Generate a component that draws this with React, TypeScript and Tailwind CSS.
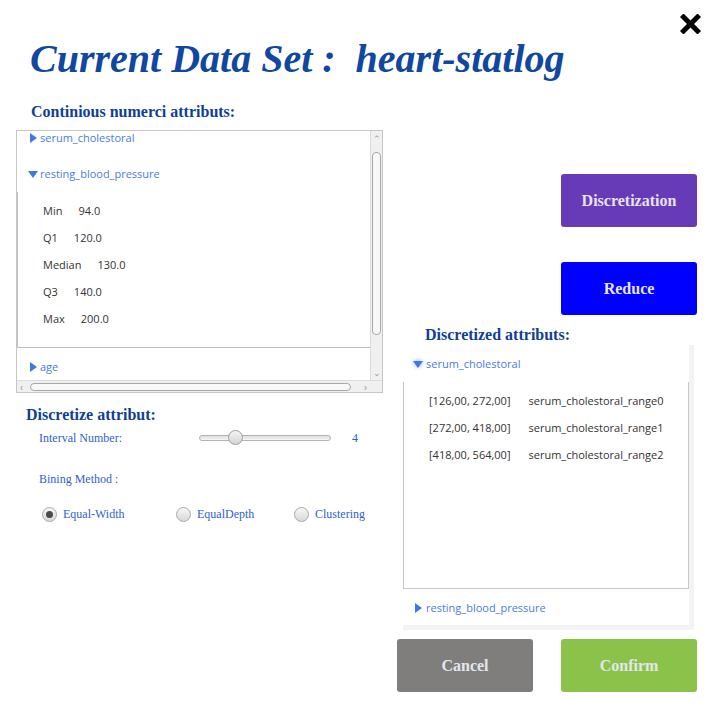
import React, { useState } from 'react';

const stats = [
  { k: 'Min', v: '94.0' },
  { k: 'Q1', v: '120.0' },
  { k: 'Median', v: '130.0' },
  { k: 'Q3', v: '140.0' },
  { k: 'Max', v: '200.0' },
];

const ranges = [
  { r: '[126,00, 272,00]', n: 'serum_cholestoral_range0' },
  { r: '[272,00, 418,00]', n: 'serum_cholestoral_range1' },
  { r: '[418,00, 564,00]', n: 'serum_cholestoral_range2' },
];

const Arrow = ({ open, glow }: { open: boolean; glow?: boolean }) => (
  <span className="flex h-[14px] w-[12px] items-center justify-center">
    {open ? (
      <svg width="10" height="7" viewBox="0 0 10 7" className={glow ? 'drop-shadow-[0_0_2px_#7fb0ff]' : ''}>
        <polygon points="0,0 10,0 5,7" fill="#3f78e4" />
      </svg>
    ) : (
      <svg width="7" height="10" viewBox="0 0 7 10">
        <polygon points="0,0 7,5 0,10" fill="#3f78e4" />
      </svg>
    )}
  </span>
);

const Radio = ({ checked, label, onClick }: { checked: boolean; label: string; onClick: () => void }) => (
  <button type="button" onClick={onClick} className="flex items-center gap-[6px]">
    <span className="flex h-[15px] w-[15px] items-center justify-center rounded-full border border-[#a9a9a9] bg-gradient-to-b from-[#f7f7f7] to-[#d9d9d9]">
      {checked && <span className="h-[7px] w-[7px] rounded-full bg-[#4a4a4a]" />}
    </span>
    <span className="text-[12px] text-[#2f5fd0]">{label}</span>
  </button>
);

const App: React.FC = () => {
  const [method, setMethod] = useState('Equal-Width');

  return (
    <div className="relative h-[716px] w-[717px] overflow-hidden bg-white font-['Liberation_Serif','Times_New_Roman',serif]">
      {/* close */}
      <div className="flex h-[34px] justify-end pr-[16px] pt-[14px]">
        <svg width="21" height="20" viewBox="0 0 21 20">
          <path d="M3.5 3 L17.5 17 M17.5 3 L3.5 17" stroke="#000" strokeWidth="5" strokeLinecap="square" />
        </svg>
      </div>
      <h1 className="ml-[30px] mt-[5px] whitespace-pre text-[40px] font-bold italic leading-[40px] text-[#0f47a1]">
        Current Data Set :  heart-statlog
      </h1>

      <div className="flex">
        {/* left column */}
        <div className="flex w-[397px] flex-col">
          <div className="ml-[31px] mt-[25px] text-[16px] font-bold leading-[16px] text-[#0f3f94]">
            Continious numerci attributs:
          </div>
          <div className="ml-[16px] mt-[10px] flex h-[263px] w-[367px] flex-col border border-[#c6c6c6] font-['Open_Sans',sans-serif] text-[11px]">
            <div className="flex h-[249px]">
              <div className="flex flex-1 flex-col overflow-hidden text-[#4a7be6]">
                <div className="flex h-[31px] items-start pl-[10px] pt-[0px] leading-[14px]">
                  <Arrow open={false} />
                  <span className="ml-[1px]">serum_cholestoral</span>
                </div>
                <div className="flex h-[30px] items-start pl-[10px] pt-[5px] leading-[14px]">
                  <Arrow open />
                  <span className="ml-[1px]">resting_blood_pressure</span>
                </div>
                <div className="flex h-[156px] flex-col border-b border-l border-[#bdbdbd] pl-[25px] pt-[6px] text-[#333]">
                  {stats.map((s) => (
                    <div key={s.k} className="flex h-[27px] items-center gap-[16px]">
                      <span>{s.k}</span>
                      <span>{s.v}</span>
                    </div>
                  ))}
                </div>
                <div className="flex items-start pl-[10px] pt-[12px] leading-[14px]">
                  <Arrow open={false} />
                  <span className="ml-[1px]">age</span>
                </div>
              </div>
              {/* vertical scrollbar */}
              <div className="flex w-[12px] flex-col items-center border-l border-[#dcdcdc] bg-[#f0f0f0]">
                <span className="mt-[3px] text-[9px] leading-[10px] text-[#9a9a9a]">&#8963;</span>
                <div className="mt-[8px] h-[183px] w-[9px] rounded-[4px] border border-[#a8a8a8] bg-[#f8f8f8]" />
                <span className="mt-auto mb-[2px] text-[9px] leading-[10px] text-[#9a9a9a]">&#8964;</span>
              </div>
            </div>
            {/* horizontal scrollbar */}
            <div className="flex h-[12px] items-center border-t border-[#dcdcdc] bg-[#f0f0f0]">
              <span className="ml-[3px] w-[8px] text-[10px] leading-[10px] text-[#9a9a9a]">&#8249;</span>
              <div className="ml-[2px] h-[8px] w-[321px] rounded-[4px] border border-[#a8a8a8] bg-[#f8f8f8]" />
              <span className="ml-[13px] text-[10px] leading-[10px] text-[#9a9a9a]">&#8250;</span>
            </div>
          </div>

          <div className="ml-[26px] mt-[14px] text-[16px] font-bold leading-[16px] text-[#0f3f94]">
            Discretize attribut:
          </div>
          <div className="ml-[39px] mt-[7px] flex h-[16px] items-center text-[12px] text-[#2f5fd0]">
            <span className="w-[160px]">Interval Number:</span>
            <div className="relative flex h-[16px] w-[132px] items-center">
              <div className="h-[6px] w-full rounded-full border border-[#b4b4b4] bg-gradient-to-b from-[#dedede] to-[#f6f6f6]" />
              <div className="absolute left-[29px] top-[0px] h-[15px] w-[15px] rounded-full border border-[#9c9c9c] bg-gradient-to-b from-[#f4f4f4] to-[#d4d4d4]" />
            </div>
            <span className="ml-[21px]">4</span>
          </div>
          <div className="ml-[39px] mt-[25px] h-[16px] text-[12px] leading-[16px] text-[#2f5fd0]">Bining Method :</div>
          <div className="ml-[42px] mt-[19px] flex h-[16px] items-center">
            <div className="w-[134px]">
              <Radio checked={method === 'Equal-Width'} label="Equal-Width" onClick={() => setMethod('Equal-Width')} />
            </div>
            <div className="w-[118px]">
              <Radio checked={method === 'EqualDepth'} label="EqualDepth" onClick={() => setMethod('EqualDepth')} />
            </div>
            <Radio checked={method === 'Clustering'} label="Clustering" onClick={() => setMethod('Clustering')} />
          </div>
        </div>

        {/* right column */}
        <div className="flex w-[300px] flex-col">
          <button className="mt-[95px] h-[53px] w-[136px] self-end rounded-[3px] bg-[#673ab7] text-[16px] font-bold text-[#e6e2f0]">
            Discretization
          </button>
          <button className="mt-[35px] h-[53px] w-[136px] self-end rounded-[3px] bg-[#0000ff] text-[16px] font-bold text-[#e6e2f0]">
            Reduce
          </button>
          <div className="ml-[28px] mt-[12px] text-[16px] font-bold leading-[16px] text-[#0f3f94]">
            Discretized attributs:
          </div>
          <div className="ml-[6px] mt-[2px] h-[285px] w-[291px] bg-[#f3f3f3] pb-[5px] pr-[5px] font-['Open_Sans',sans-serif] text-[11px]">
            <div className="flex h-full flex-col bg-white text-[#4a7be6]">
              <div className="flex h-[37px] items-start pl-[9px] pt-[12px] leading-[14px]">
                <Arrow open glow />
                <span className="ml-[2px]">serum_cholestoral</span>
              </div>
              <div className="flex h-[207px] flex-col border-x border-b border-[#c8c8c8] pl-[25px] pt-[6px] text-[#333]">
                {ranges.map((r) => (
                  <div key={r.n} className="flex h-[27px] items-center gap-[18px]">
                    <span>{r.r}</span>
                    <span>{r.n}</span>
                  </div>
                ))}
              </div>
              <div className="flex items-start pl-[9px] pt-[12px] leading-[14px]">
                <Arrow open={false} />
                <span className="ml-[2px]">resting_blood_pressure</span>
              </div>
            </div>
          </div>
          <div className="mt-[9px] flex justify-between">
            <button className="h-[53px] w-[136px] rounded-[3px] bg-[#807e7c] text-[16px] font-bold text-[#e2e6ee]">
              Cancel
            </button>
            <button className="h-[53px] w-[136px] rounded-[3px] bg-[#8bc34a] text-[16px] font-bold text-[#e2e6ee]">
              Confirm
            </button>
          </div>
        </div>
      </div>
    </div>
  );
};

export default App;
